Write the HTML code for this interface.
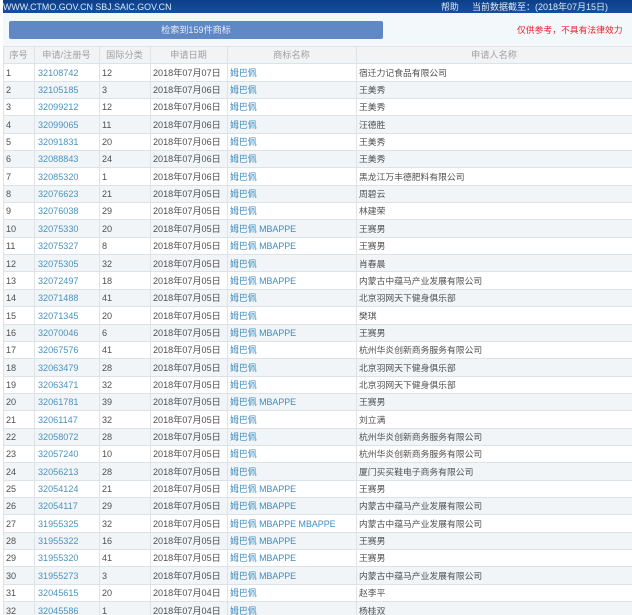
<!DOCTYPE html>
<html lang="zh"><head><meta charset="utf-8"><style>
html,body{margin:0;padding:0;background:#fff}
#p{position:relative;width:632px;height:615px;overflow:hidden;background:#fff;font:9.1px/17px "Liberation Sans","Noto Sans CJK SC",sans-serif;color:#505050;filter:blur(.35px)}
#t{position:absolute;left:3px;right:0;top:0;height:13px;background:linear-gradient(#0d3f8a,#164f9e);color:#dfe8f2;font-size:8.9px;line-height:10px}
#t span{position:absolute;top:2px;white-space:nowrap}
#s{position:absolute;left:3px;right:0;top:13px;height:33px;background:#f3f8fb}
#b{position:absolute;left:9px;top:21px;width:374px;height:18px;background:#5f88c4;border-radius:2px;color:#e6edf6;text-align:center;line-height:18px;font-size:9.1px}
#w{position:absolute;left:517px;top:23px;color:#e8202a;font-size:8.8px;line-height:14px;white-space:nowrap}
.r{position:absolute;left:3px;right:0;height:17.35px;border-bottom:1px solid #dbe3e8;box-sizing:border-box;background:#fff}
.r:nth-child(odd){background:#f1f5f8}
.r span{position:absolute;top:.4px;white-space:nowrap}
.h{background:#f1f3f5!important;color:#a0a0a0;border-top:1px solid #e3e6e8}
.h span{text-align:center;font-size:9.2px}
.a{left:35px;color:#4a93bd}.c{left:99px}.d{left:150px}.n{left:227px;color:#3d8cc0;font-size:8.9px}.o{left:356px;font-size:8.8px}.i{left:3px}
.v{position:absolute;top:46px;bottom:0;width:1px;background:#dde3e7}
</style></head><body><div id="p">
<div id="s"></div>
<div id="t"><span style="left:0">WWW.CTMO.GOV.CN SBJ.SAIC.GOV.CN</span><span style="left:438px">帮助</span><span style="left:469px;font-size:9px">当前数据截至：(2018年07月15日)</span></div>
<div id="b">检索到159件商标</div>
<div id="w">仅供参考，不具有法律效力</div>
<div id="rows">
<div class="r h" style="top:46px;height:18.4px"><span style="left:0;width:31px">序号</span><span style="left:31px;width:65px">申请/注册号</span><span style="left:96px;width:51px">国际分类</span><span style="left:147px;width:77px">申请日期</span><span style="left:224px;width:129px">商标名称</span><span style="left:353px;width:276px">申请人名称</span></div>
<div class="r" style="top:64.3px"><span class="i">1</span><span class="a">32108742</span><span class="c">12</span><span class="d">2018年07月07日</span><span class="n">姆巴佩</span><span class="o">宿迁力记食品有限公司</span></div>
<div class="r" style="top:81.65px"><span class="i">2</span><span class="a">32105185</span><span class="c">3</span><span class="d">2018年07月06日</span><span class="n">姆巴佩</span><span class="o">王美秀</span></div>
<div class="r" style="top:99px"><span class="i">3</span><span class="a">32099212</span><span class="c">12</span><span class="d">2018年07月06日</span><span class="n">姆巴佩</span><span class="o">王美秀</span></div>
<div class="r" style="top:116.35px"><span class="i">4</span><span class="a">32099065</span><span class="c">11</span><span class="d">2018年07月06日</span><span class="n">姆巴佩</span><span class="o">汪德胜</span></div>
<div class="r" style="top:133.7px"><span class="i">5</span><span class="a">32091831</span><span class="c">20</span><span class="d">2018年07月06日</span><span class="n">姆巴佩</span><span class="o">王美秀</span></div>
<div class="r" style="top:151.05px"><span class="i">6</span><span class="a">32088843</span><span class="c">24</span><span class="d">2018年07月06日</span><span class="n">姆巴佩</span><span class="o">王美秀</span></div>
<div class="r" style="top:168.4px"><span class="i">7</span><span class="a">32085320</span><span class="c">1</span><span class="d">2018年07月06日</span><span class="n">姆巴佩</span><span class="o">黑龙江万丰德肥料有限公司</span></div>
<div class="r" style="top:185.75px"><span class="i">8</span><span class="a">32076623</span><span class="c">21</span><span class="d">2018年07月05日</span><span class="n">姆巴佩</span><span class="o">周碧云</span></div>
<div class="r" style="top:203.1px"><span class="i">9</span><span class="a">32076038</span><span class="c">29</span><span class="d">2018年07月05日</span><span class="n">姆巴佩</span><span class="o">林建荣</span></div>
<div class="r" style="top:220.45px"><span class="i">10</span><span class="a">32075330</span><span class="c">20</span><span class="d">2018年07月05日</span><span class="n">姆巴佩 MBAPPE</span><span class="o">王赛男</span></div>
<div class="r" style="top:237.8px"><span class="i">11</span><span class="a">32075327</span><span class="c">8</span><span class="d">2018年07月05日</span><span class="n">姆巴佩 MBAPPE</span><span class="o">王赛男</span></div>
<div class="r" style="top:255.15px"><span class="i">12</span><span class="a">32075305</span><span class="c">32</span><span class="d">2018年07月05日</span><span class="n">姆巴佩</span><span class="o">肖春晨</span></div>
<div class="r" style="top:272.5px"><span class="i">13</span><span class="a">32072497</span><span class="c">18</span><span class="d">2018年07月05日</span><span class="n">姆巴佩 MBAPPE</span><span class="o">内蒙古中蕴马产业发展有限公司</span></div>
<div class="r" style="top:289.85px"><span class="i">14</span><span class="a">32071488</span><span class="c">41</span><span class="d">2018年07月05日</span><span class="n">姆巴佩</span><span class="o">北京羽网天下健身俱乐部</span></div>
<div class="r" style="top:307.2px"><span class="i">15</span><span class="a">32071345</span><span class="c">20</span><span class="d">2018年07月05日</span><span class="n">姆巴佩</span><span class="o">樊琪</span></div>
<div class="r" style="top:324.55px"><span class="i">16</span><span class="a">32070046</span><span class="c">6</span><span class="d">2018年07月05日</span><span class="n">姆巴佩 MBAPPE</span><span class="o">王赛男</span></div>
<div class="r" style="top:341.9px"><span class="i">17</span><span class="a">32067576</span><span class="c">41</span><span class="d">2018年07月05日</span><span class="n">姆巴佩</span><span class="o">杭州华炎创新商务服务有限公司</span></div>
<div class="r" style="top:359.25px"><span class="i">18</span><span class="a">32063479</span><span class="c">28</span><span class="d">2018年07月05日</span><span class="n">姆巴佩</span><span class="o">北京羽网天下健身俱乐部</span></div>
<div class="r" style="top:376.6px"><span class="i">19</span><span class="a">32063471</span><span class="c">32</span><span class="d">2018年07月05日</span><span class="n">姆巴佩</span><span class="o">北京羽网天下健身俱乐部</span></div>
<div class="r" style="top:393.95px"><span class="i">20</span><span class="a">32061781</span><span class="c">39</span><span class="d">2018年07月05日</span><span class="n">姆巴佩 MBAPPE</span><span class="o">王赛男</span></div>
<div class="r" style="top:411.3px"><span class="i">21</span><span class="a">32061147</span><span class="c">32</span><span class="d">2018年07月05日</span><span class="n">姆巴佩</span><span class="o">刘立满</span></div>
<div class="r" style="top:428.65px"><span class="i">22</span><span class="a">32058072</span><span class="c">28</span><span class="d">2018年07月05日</span><span class="n">姆巴佩</span><span class="o">杭州华炎创新商务服务有限公司</span></div>
<div class="r" style="top:446px"><span class="i">23</span><span class="a">32057240</span><span class="c">10</span><span class="d">2018年07月05日</span><span class="n">姆巴佩</span><span class="o">杭州华炎创新商务服务有限公司</span></div>
<div class="r" style="top:463.35px"><span class="i">24</span><span class="a">32056213</span><span class="c">28</span><span class="d">2018年07月05日</span><span class="n">姆巴佩</span><span class="o">厦门买买鞋电子商务有限公司</span></div>
<div class="r" style="top:480.7px"><span class="i">25</span><span class="a">32054124</span><span class="c">21</span><span class="d">2018年07月05日</span><span class="n">姆巴佩 MBAPPE</span><span class="o">王赛男</span></div>
<div class="r" style="top:498.05px"><span class="i">26</span><span class="a">32054117</span><span class="c">29</span><span class="d">2018年07月05日</span><span class="n">姆巴佩 MBAPPE</span><span class="o">内蒙古中蕴马产业发展有限公司</span></div>
<div class="r" style="top:515.4px"><span class="i">27</span><span class="a">31955325</span><span class="c">32</span><span class="d">2018年07月05日</span><span class="n">姆巴佩 MBAPPE MBAPPE</span><span class="o">内蒙古中蕴马产业发展有限公司</span></div>
<div class="r" style="top:532.75px"><span class="i">28</span><span class="a">31955322</span><span class="c">16</span><span class="d">2018年07月05日</span><span class="n">姆巴佩 MBAPPE</span><span class="o">王赛男</span></div>
<div class="r" style="top:550.1px"><span class="i">29</span><span class="a">31955320</span><span class="c">41</span><span class="d">2018年07月05日</span><span class="n">姆巴佩 MBAPPE</span><span class="o">王赛男</span></div>
<div class="r" style="top:567.45px"><span class="i">30</span><span class="a">31955273</span><span class="c">3</span><span class="d">2018年07月05日</span><span class="n">姆巴佩 MBAPPE</span><span class="o">内蒙古中蕴马产业发展有限公司</span></div>
<div class="r" style="top:584.8px"><span class="i">31</span><span class="a">32045615</span><span class="c">20</span><span class="d">2018年07月04日</span><span class="n">姆巴佩</span><span class="o">赵李平</span></div>
<div class="r" style="top:602.15px"><span class="i">32</span><span class="a">32045586</span><span class="c">1</span><span class="d">2018年07月04日</span><span class="n">姆巴佩</span><span class="o">杨桂双</span></div>
</div>
<div class="v" style="left:3px"></div><div class="v" style="left:34px"></div><div class="v" style="left:99px"></div><div class="v" style="left:150px"></div><div class="v" style="left:227px"></div><div class="v" style="left:356px"></div>
</div></body></html>
